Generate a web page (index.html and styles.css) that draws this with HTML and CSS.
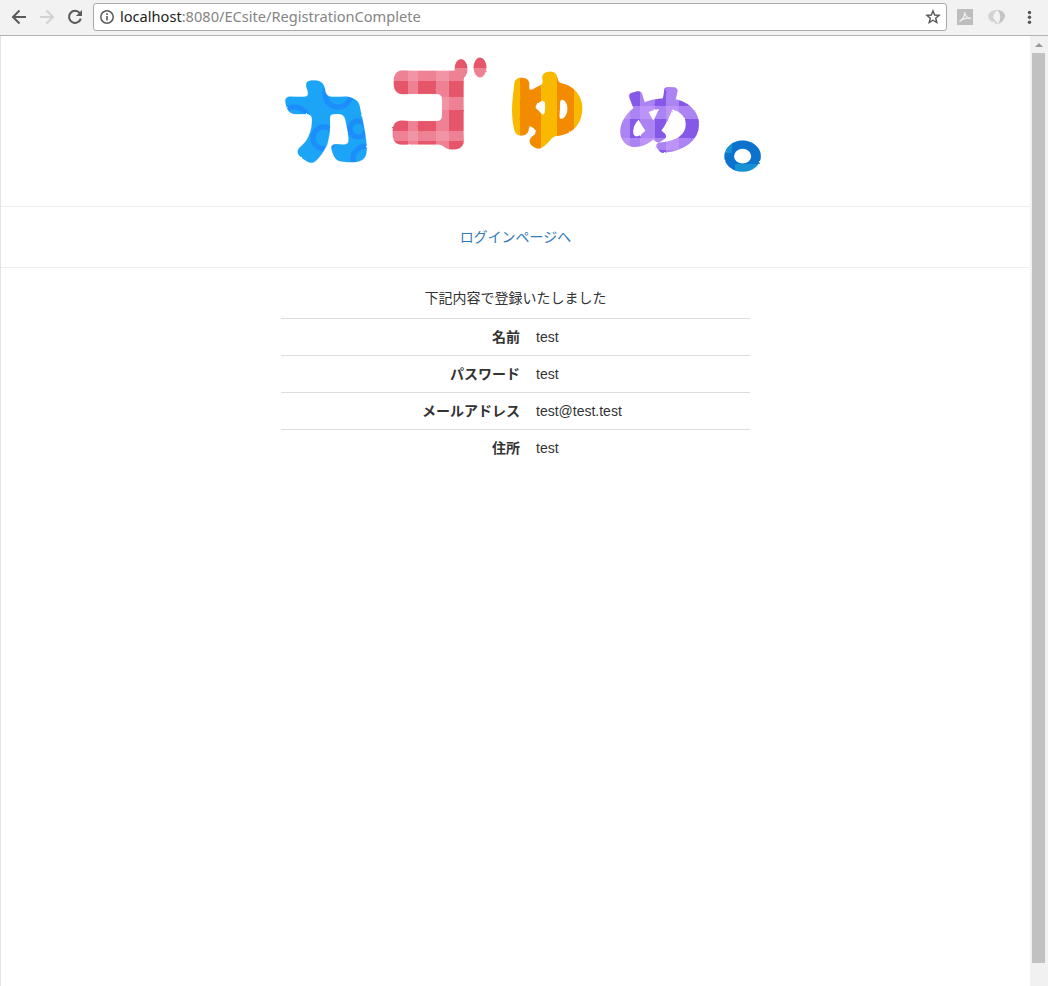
FILE: index.html
```html
<!DOCTYPE html>
<html lang="ja">
<head>
<meta charset="utf-8">
<title>RegistrationComplete</title>
<link rel="stylesheet" href="styles.css">
</head>
<body>
<div class="toolbar">
  <svg class="nav" width="93" height="35" viewBox="0 0 93 35" fill="none" stroke-width="2">
    <path stroke="#5a5a5a" d="M26 17H13M19.500 10.500L13 17L19.500 23.500"/>
    <path stroke="#d2d2d2" d="M40 17H53M46.500 10.500L53 17L46.500 23.500"/>
    <path stroke="#5a5a5a" d="M79.800 13.200A6 6 0 1 0 80.800 18.600"/>
    <path fill="#5a5a5a" d="M82 10V16H76Z"/>
  </svg>
  <div class="address">
    <svg width="16" height="16" viewBox="0 0 16 16" fill="none" stroke="#5a5a5a"><circle cx="8" cy="8" r="6.200" stroke-width="1.500"/><path stroke-width="1.600" d="M8 7V11.500M8 4.300V6"/></svg>
    <span class="url"><span class="host">localhost</span>:8080/ECsite/RegistrationComplete</span>
    <svg class="star" width="16" height="16" viewBox="0 0 16 16" fill="none" stroke="#555" stroke-width="1.400"><path d="M8 1.900L9.700 6L14.100 6.300L10.700 9.200L11.800 13.500L8 11.200L4.200 13.500L5.300 9.200L1.900 6.300L6.300 6Z"/></svg>
  </div>
  <svg class="tools" width="101" height="35" viewBox="0 0 101 35">
    <rect x="10" y="9" width="16" height="16" fill="#bdbdbd"/>
    <path d="M12.500 21.500C16 19 18 15 17.500 12C18 15.500 20 18 24 18.500C20 17.500 16 18.500 12.500 21.500Z" fill="none" stroke="#eee" stroke-width="1.300"/>
    <path d="M50.500 10C39 10 39 20 46.500 22.500C45.500 18 46 14 50.500 10Z" fill="#d3d3d3"/>
    <path d="M50 10C60 10 61 20 50.500 24.500C54 20 54.500 14 50 10Z" fill="#c4c4c4"/>
    <path d="M45 18L50 24" stroke="#cecece" stroke-width="1.800"/>
    <g fill="#555"><circle cx="82.500" cy="12.500" r="1.700"/><circle cx="82.500" cy="17.300" r="1.700"/><circle cx="82.500" cy="22.200" r="1.700"/></g>
  </svg>
</div>
<div class="viewport">
  <main class="page">
    <header class="brand">
      <svg width="500" height="170" viewBox="266 36 500 170">
        <defs>
          <filter id="rough" x="-10%" y="-10%" width="120%" height="120%">
            <feTurbulence type="fractalNoise" baseFrequency="0.35" numOctaves="2" seed="4"/>
            <feDisplacementMap in="SourceGraphic" scale="1.800" xChannelSelector="R" yChannelSelector="G"/>
          </filter>
          <filter id="soft" x="-20%" y="-20%" width="140%" height="140%">
            <feGaussianBlur stdDeviation="3"/>
            <feComponentTransfer><feFuncA type="linear" slope="6" intercept="-2.500"/></feComponentTransfer>
          </filter>
          <mask id="m1"><text class="glyph" filter="url(#soft)" stroke-width="12" transform="translate(293.500 155) skewX(15) scale(.87 .88)">カ</text></mask>
          <mask id="m2"><text class="glyph" filter="url(#soft)" stroke-width="18" transform="translate(387 140) scale(.82 .9)">コ</text><ellipse cx="461" cy="69" rx="6.500" ry="10" fill="#fff"/><ellipse cx="480" cy="67.500" rx="6.500" ry="10" fill="#fff"/></mask>
          <mask id="m3"><text class="glyph light" filter="url(#soft)" stroke-width="14" transform="translate(506 139) scale(.79 .78)">ゆ</text></mask>
          <mask id="m4"><text class="glyph light" stroke-width="10" transform="translate(616 146) scale(.88 .72)">め</text></mask>
          <mask id="m5"><text class="glyph" stroke-width="4" transform="translate(722 164) scale(1.060 .9)">。</text></mask>
        </defs>
        <g filter="url(#rough)">
          <g mask="url(#m1)">
            <rect x="270" y="60" width="110" height="120" fill="#1aa4f6"/>
            <g fill="none" stroke="#1b8dfa" stroke-width="5"><circle cx="294" cy="122" r="15"/><circle cx="338" cy="94" r="13"/><circle cx="358" cy="129" r="8"/><circle cx="324" cy="138" r="11"/><circle cx="366" cy="159" r="13"/></g>
          </g>
          <g mask="url(#m2)">
            <rect x="380" y="50" width="120" height="110" fill="#e6566a"/>
            <g fill="#f4a0b0" fill-opacity=".6"><path d="M380 68H500V81H380ZM380 97H500V110H380ZM380 131H500V141H380Z"/><path d="M408 50H418V160H408ZM436 50H449V160H436Z"/></g>
          </g>
          <g mask="url(#m3)">
            <rect x="500" y="60" width="100" height="100" fill="#f28b00"/>
            <path fill="#f9b905" d="M500 60H520V160H500ZM541 60H557V160H541ZM574 60H600V160H574Z"/>
          </g>
          <g mask="url(#m4)">
            <rect x="605" y="75" width="110" height="90" fill="#8659e8"/>
            <g fill="#c6a0fa" fill-opacity=".6"><path d="M605 106H715V119H605ZM605 138H715V150H605Z"/><path d="M605 75H630V165H605ZM640 75H655V165H640ZM666 75H679V165H666Z"/></g>
          </g>
          <g mask="url(#m5)">
            <rect x="715" y="130" width="60" height="55" fill="#0871ce"/>
            <path fill="#1592d2" d="M735 164H765V175H735ZM722 144H732V153H722Z"/>
          </g>
        </g>
      </svg>
    </header>
    <nav class="links"><a>ログインページへ</a></nav>
    <p class="message">下記内容で登録いたしました</p>
    <table class="details">
      <tr><th>名前</th><td>test</td></tr>
      <tr><th>パスワード</th><td>test</td></tr>
      <tr><th>メールアドレス</th><td>test@test.test</td></tr>
      <tr><th>住所</th><td>test</td></tr>
    </table>
  </main>
  <div class="scrollbar"><i class="arrow"></i><i class="thumb"></i></div>
</div>
</body>
</html>
```
FILE: styles.css
```css
* { box-sizing: border-box; }
body {
  margin: 0;
  height: 986px;
  overflow: hidden;
  display: flex;
  flex-direction: column;
  background: #fff;
  color: #333;
  font: 14px/20px "Liberation Sans", "Noto Sans CJK JP", sans-serif;
}
svg { display: block; flex: none; }
.toolbar {
  height: 36px;
  flex: none;
  display: flex;
  background: #f2f2f2;
  border-bottom: 1px solid #b4b4b4;
}
.address {
  flex: 1;
  height: 28px;
  margin-top: 3px;
  padding: 0 5px;
  display: flex;
  align-items: center;
  background: #fff;
  border: 1px solid #aaa;
  border-radius: 3px;
}
.url {
  margin-left: 5px;
  padding-bottom: 2px;
  font-family: "Noto Sans", sans-serif;
  font-size: 14.6px;
  color: #858585;
  white-space: nowrap;
}
.host { color: #222; }
.star { margin-left: auto; }
.viewport { flex: 1; display: flex; }
.page { flex: 1; border-left: 1px solid #e4e4e4; }
.brand {
  height: 171px;
  display: flex;
  justify-content: center;
  border-bottom: 1px solid #eee;
}
.links {
  height: 61px;
  padding-top: 20px;
  text-align: center;
  border-bottom: 1px solid #eee;
}
.links a { color: #337ab7; }
.message { margin: 20px 0 10px; text-align: center; }
.details {
  width: 469px;
  margin: 0 auto;
  border-collapse: separate;
  border-spacing: 0;
  table-layout: fixed;
}
.details th, .details td {
  height: 37px;
  padding: 8px;
  line-height: 20px;
  border-top: 1px solid #ddd;
  text-align: left;
}
.details th { width: 247px; text-align: right; }
.scrollbar {
  width: 18px;
  background: #f1f1f1;
  display: flex;
  flex-direction: column;
  padding: 7px 3px 0 2px;
}
.arrow {
  width: 8px;
  height: 4px;
  margin-left: 3px;
  background: #999;
  clip-path: polygon(50% 0, 100% 100%, 0 100%);
}
.thumb { height: 910px; margin-top: 6px; background: #c1c1c1; }
.glyph {
  font: 400 100px "Noto Sans CJK JP", sans-serif;
  fill: #fff;
  stroke: #fff;
  stroke-linejoin: round;
}
.light { font-weight: 300; }
```
